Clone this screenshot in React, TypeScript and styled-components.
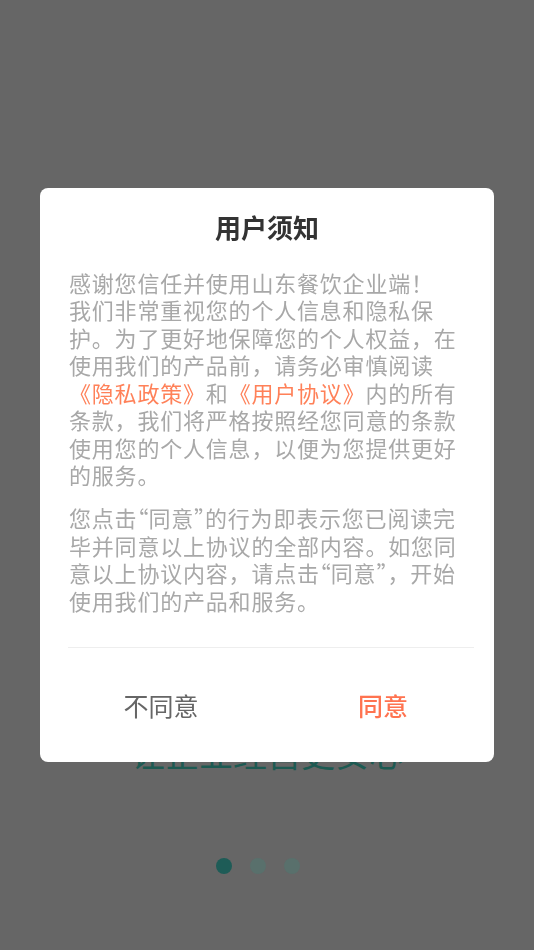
import styled, { createGlobalStyle } from "styled-components";

const GlobalStyle = createGlobalStyle`
  html, body {
    margin: 0;
    padding: 0;
  }
  body {
    font-family: "Noto Sans CJK SC", "Noto Sans", sans-serif;
    background: #666666;
  }
`;

const Page = styled.div`
  min-height: 950px;
  display: flex;
  flex-direction: column;
  align-items: center;
  padding-top: 728px;
  box-sizing: border-box;
`;

const Slogan = styled.h2`
  margin: 0;
  font-size: 34px;
  line-height: 50px;
  font-weight: 400;
  color: #1d5a52;
`;

const Dots = styled.div`
  display: flex;
  gap: 18px;
  margin: 80px 18px 0 0;
`;

const Dot = styled.span<{ $active?: boolean }>`
  width: 16px;
  height: 16px;
  border-radius: 50%;
  background: ${(p) => (p.$active ? "#1e5c57" : "#59706c")};
`;

const Overlay = styled.div`
  position: fixed;
  inset: 0;
  display: flex;
  align-items: center;
  justify-content: center;
`;

const Dialog = styled.div`
  width: 454px;
  background: #ffffff;
  border-radius: 8px;
  padding-top: 21px;
  box-sizing: border-box;
  overflow: hidden;
`;

const Title = styled.h1`
  margin: 0 0 24px;
  text-align: center;
  font-size: 26px;
  line-height: 36px;
  font-weight: 700;
  color: #333333;
`;

const Body = styled.div`
  padding: 0 28px 0 29px;
`;

const Para = styled.p`
  margin: 0 0 16px;
  font-size: 22px;
  line-height: 27.4px;
  letter-spacing: 0.8px;
  color: #a8a8a8;
  line-break: strict;

  &:last-child {
    margin-bottom: 0;
  }
`;

const Quote = styled.span<{ $open?: boolean }>`
  display: inline-block;
  width: 11px;
  letter-spacing: 0;
  text-align: ${(p) => (p.$open ? "right" : "left")};
  direction: ${(p) => (p.$open ? "rtl" : "ltr")};
`;

const Link = styled.a`
  color: #ff8159;
  text-decoration: none;
`;

const Divider = styled.hr`
  margin: 33px 20px 0 28px;
  border: 0;
  border-top: 1px solid #eeeeee;
`;

const Actions = styled.div`
  display: flex;
  height: 114px;
  padding-left: 10px;
`;

const ActionButton = styled.button<{ $primary?: boolean }>`
  flex: 1;
  border: 0;
  background: transparent;
  font-family: inherit;
  font-size: 25px;
  font-weight: ${(p) => (p.$primary ? 500 : 400)};
  color: ${(p) => (p.$primary ? "#ff7350" : "#666666")};
  cursor: pointer;
`;

export default function App() {
  return (
    <>
      <GlobalStyle />
      <Page>
        <Slogan>让企业经营更安心</Slogan>
        <Dots>
          <Dot $active />
          <Dot />
          <Dot />
        </Dots>
      </Page>
      <Overlay>
        <Dialog>
          <Title>用户须知</Title>
          <Body>
            <Para>
              感谢您信任并使用山东餐饮企业端！
              <br />
              我们非常重视您的个人信息和隐私保护。为了更好地保障您的个人权益，在使用我们的产品前，请务必审慎阅读
              <Link href="#">《隐私政策》</Link>和<Link href="#">《用户协议》</Link>
              内的所有条款，我们将严格按照经您同意的条款使用您的个人信息，以便为您提供更好的服务。
            </Para>
            <Para>
              您点击<Quote $open>“</Quote>同意<Quote>”</Quote>的行为即表示您已阅读完毕并同意以上协议的全部内容。如您同意以上协议内容，请点击
              <Quote $open>“</Quote>同意<Quote>”</Quote>，开始使用我们的产品和服务。
            </Para>
          </Body>
          <Divider />
          <Actions>
            <ActionButton>不同意</ActionButton>
            <ActionButton $primary>同意</ActionButton>
          </Actions>
        </Dialog>
      </Overlay>
    </>
  );
}
